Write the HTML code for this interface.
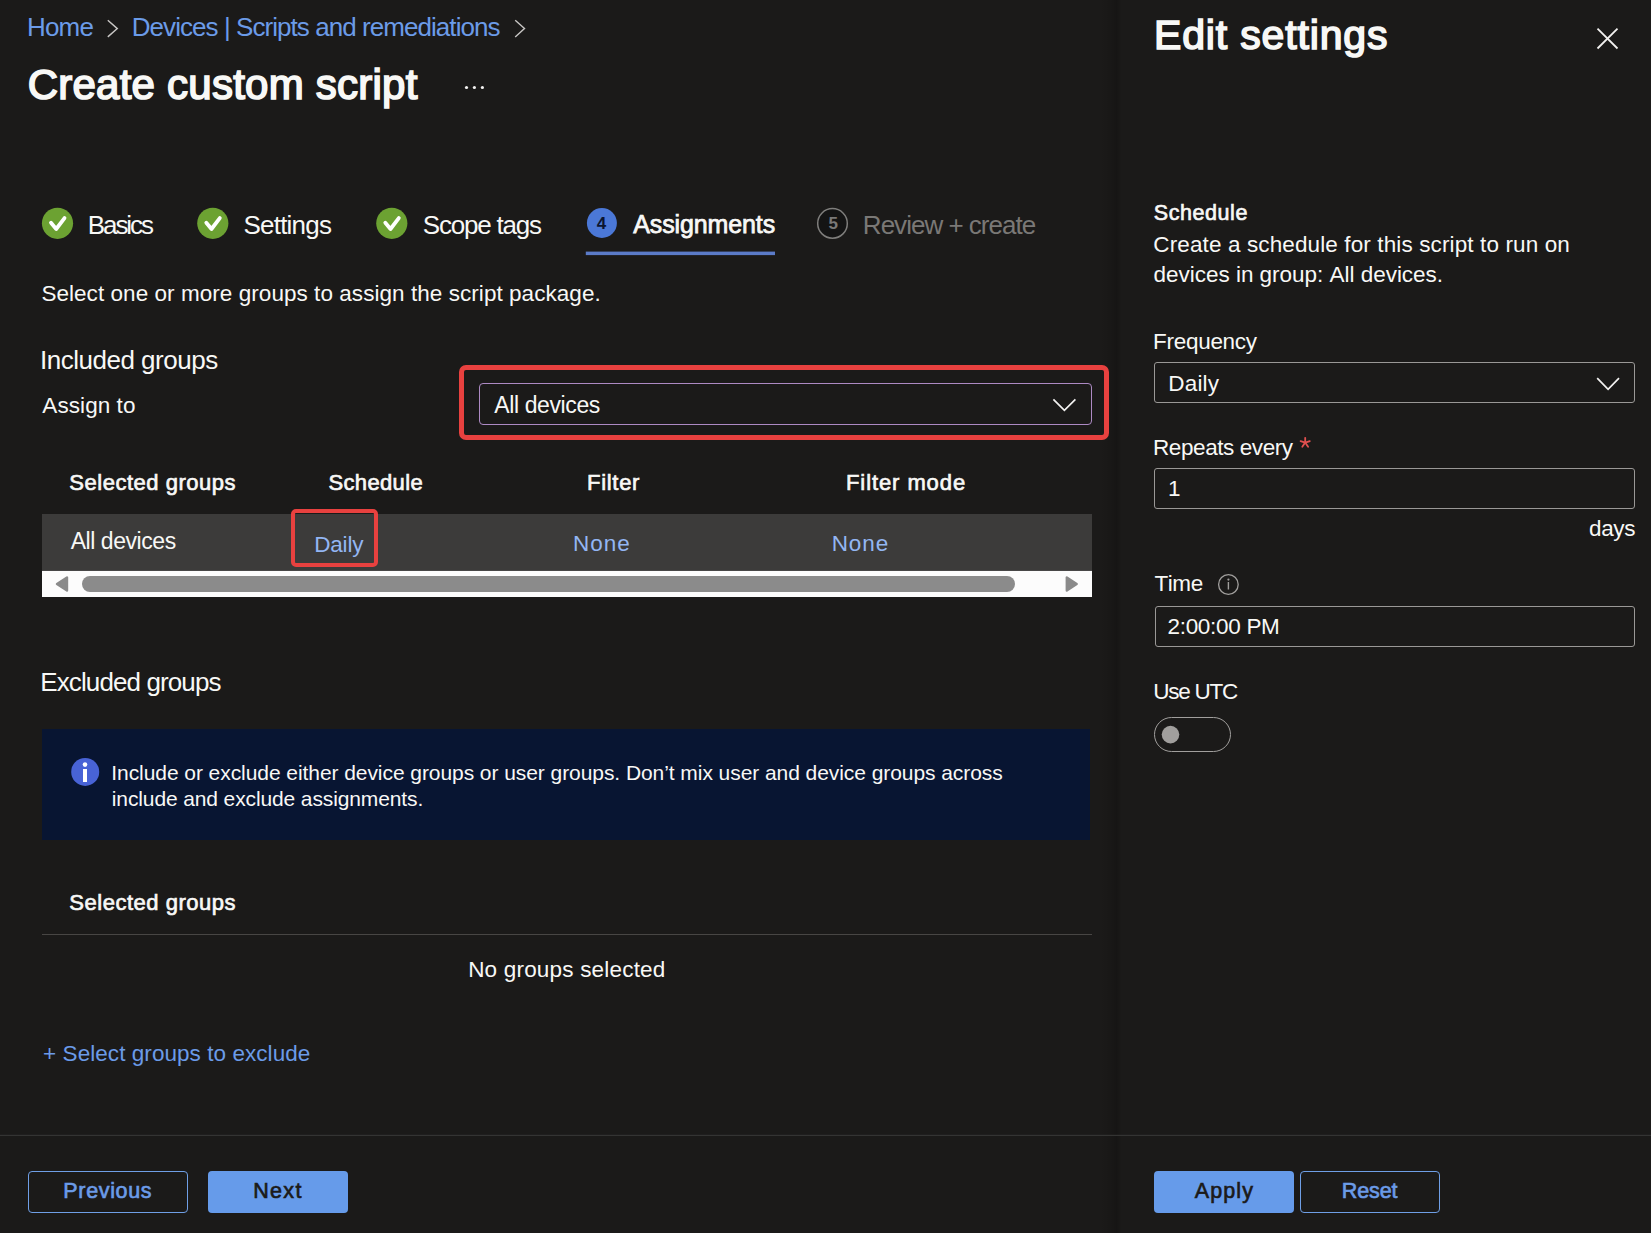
<!DOCTYPE html>
<html><head><meta charset="utf-8"><style>
html,body{margin:0;padding:0;background:#1b1a19;}
body{width:1651px;height:1233px;background:#1b1a19;position:relative;overflow:hidden;font-family:"Liberation Sans",sans-serif;}
.t{position:absolute;white-space:nowrap;font-kerning:none;}
.a{position:absolute;box-sizing:border-box;}
</style></head><body>
<!-- panel shadow -->
<div class="a" style="left:1100px;top:0;width:22px;height:1233px;background:linear-gradient(to right,rgba(0,0,0,0) 0%,rgba(0,0,0,0.10) 55%,rgba(0,0,0,0.18) 75%,rgba(0,0,0,0) 100%);"></div>

<!-- red box big -->
<div class="a" style="left:459px;top:365px;width:650px;height:75px;border:5px solid #e8413f;border-radius:7px;"></div>
<!-- purple dropdown -->
<div class="a" style="left:479px;top:383px;width:613.1px;height:42.2px;border:1px solid #ad8ac4;border-radius:4px;"></div>
<!-- row -->
<div class="a" style="left:41.6px;top:513.6px;width:1050.4px;height:56.4px;background:#3c3b3a;"></div>
<!-- red box daily -->
<div class="a" style="left:291px;top:509px;width:87px;height:58px;border:4px solid #e8413f;border-radius:5px;"></div>
<!-- info box -->
<div class="a" style="left:42.4px;top:728.5px;width:1047.8px;height:111px;background:#081532;"></div>
<!-- line under selected groups -->
<div class="a" style="left:42.4px;top:933.6px;width:1049.2px;height:1.2px;background:#484644;"></div>
<!-- previous / next -->
<div class="a" style="left:28.1px;top:1171.3px;width:159.7px;height:41.3px;border:1.5px solid #6f9fe6;border-radius:4px;"></div>
<div class="a" style="left:208px;top:1171px;width:139.8px;height:42px;background:#669bea;border-radius:4px;"></div>
<!-- right panel inputs -->
<div class="a" style="left:1154px;top:362.4px;width:480.6px;height:41px;border:1.4px solid #9a9896;border-radius:3px;"></div>
<div class="a" style="left:1154px;top:468.3px;width:480.6px;height:41.2px;border:1.4px solid #9a9896;border-radius:3px;"></div>
<div class="a" style="left:1154.5px;top:605.5px;width:480.1px;height:41.4px;border:1.4px solid #9a9896;border-radius:3px;"></div>
<div class="a" style="left:1154.1px;top:717px;width:76.7px;height:35px;border:1.5px solid #a19f9d;border-radius:18px;"></div>
<div class="a" style="left:1154.1px;top:1170.9px;width:139.9px;height:42.1px;background:#669bea;border-radius:4px;"></div>
<div class="a" style="left:1300.2px;top:1170.9px;width:139.6px;height:42.1px;border:1.5px solid #6f9fe6;border-radius:4px;"></div>
<svg class="a" style="left:0;top:0" width="1651" height="1233" viewBox="0 0 1651 1233">
  <!-- breadcrumb chevrons -->
  <polyline points="107.8,20.3 117.3,28.6 107.8,36.9" fill="none" stroke="#c8c6c4" stroke-width="1.4"/>
  <polyline points="515.2,20.3 524.5,28.6 515.2,36.9" fill="none" stroke="#c8c6c4" stroke-width="1.4"/>
  <!-- title dots -->
  <circle cx="466.5" cy="87.5" r="1.6" fill="#f3f2f1"/>
  <circle cx="474.4" cy="87.5" r="1.6" fill="#f3f2f1"/>
  <circle cx="482.4" cy="87.5" r="1.6" fill="#f3f2f1"/>
  <!-- green check circles -->
  <g>
  <circle cx="57.5" cy="223.3" r="15.6" fill="#6ca232"/>
  <polyline points="51.0,222.8 56.2,229.0 64.5,218.1" fill="none" stroke="#ffffff" stroke-width="3.8" stroke-linecap="round" stroke-linejoin="round"/>
  </g>
  <g transform="translate(155.3,0)">
  <circle cx="57.5" cy="223.3" r="15.6" fill="#6ca232"/>
  <polyline points="51.0,222.8 56.2,229.0 64.5,218.1" fill="none" stroke="#ffffff" stroke-width="3.8" stroke-linecap="round" stroke-linejoin="round"/>
  </g>
  <g transform="translate(334.3,0)">
  <circle cx="57.5" cy="223.3" r="15.6" fill="#6ca232"/>
  <polyline points="51.0,222.8 56.2,229.0 64.5,218.1" fill="none" stroke="#ffffff" stroke-width="3.8" stroke-linecap="round" stroke-linejoin="round"/>
  </g>
      <!-- step 4 -->
  <circle cx="601.9" cy="223" r="15" fill="#4b78d7"/>
  <!-- step 5 -->
  <circle cx="832.5" cy="223.4" r="14.8" fill="#141414" stroke="#7f7e7c" stroke-width="1.5"/>
  <!-- underline -->
  <rect x="585.8" y="251.6" width="189.2" height="3.5" fill="#5b7bc8"/>
  <!-- dropdown chevron (assign) -->
  <polyline points="1053.4,399.3 1064.4,410.4 1075.4,399.3" fill="none" stroke="#f3f2f1" stroke-width="1.7"/>
  <!-- scrollbar -->
  <rect x="42" y="570.8" width="1050" height="26.2" fill="#fcfcfc"/>
  <polygon points="57,584 67,577.5 67,590.5" fill="#8a8a8a" stroke="#8a8a8a" stroke-width="2.4" stroke-linejoin="round"/>
  <rect x="82" y="576" width="933" height="16" rx="8" fill="#8b8b8b"/>
  <polygon points="1076.7,584 1066.8,577.5 1066.8,590.5" fill="#8a8a8a" stroke="#8a8a8a" stroke-width="2.4" stroke-linejoin="round"/>
  <!-- info icon -->
  <circle cx="85.2" cy="771.9" r="14" fill="#4863d6"/>
  <circle cx="85" cy="764.6" r="2.3" fill="#ffffff"/>
  <rect x="83" y="769" width="4" height="13" fill="#ffffff"/>
  <!-- close X -->
  <line x1="1597.5" y1="28.6" x2="1617.5" y2="48.5" stroke="#f3f2f1" stroke-width="1.8"/>
  <line x1="1617.5" y1="28.6" x2="1597.5" y2="48.5" stroke="#f3f2f1" stroke-width="1.8"/>
  <!-- frequency chevron -->
  <polyline points="1597.2,378.2 1608.1,389.3 1619,378.2" fill="none" stroke="#f3f2f1" stroke-width="1.7"/>
  <!-- asterisk -->
  <g stroke="#e0504f" stroke-width="1.8" stroke-linecap="round">
    <line x1="1305.2" y1="437.8" x2="1305.2" y2="442.6"/>
    <line x1="1305.2" y1="442.6" x2="1309.8" y2="441.1"/>
    <line x1="1305.2" y1="442.6" x2="1300.6" y2="441.1"/>
    <line x1="1305.2" y1="442.6" x2="1308.1" y2="446.8"/>
    <line x1="1305.2" y1="442.6" x2="1302.3" y2="446.8"/>
  </g>
  <!-- time info icon -->
  <circle cx="1228.4" cy="584.5" r="9.8" fill="none" stroke="#a19f9d" stroke-width="1.3"/>
  <circle cx="1228.4" cy="579.6" r="1.1" fill="#a19f9d"/>
  <rect x="1227.7" y="582" width="1.4" height="7.5" fill="#a19f9d"/>
  <!-- toggle knob -->
  <circle cx="1170.5" cy="734.6" r="8.8" fill="#a19f9d"/>
  <!-- bottom divider -->
  <rect x="0" y="1134.8" width="1651" height="1.2" fill="#343433"/>
</svg>
<div class="t" style="left:26.97px;top:14.29px;font-size:26px;line-height:26px;font-weight:400;letter-spacing:-0.822px;color:#6b9be8;">Home</div>
<div class="t" style="left:131.77px;top:14.29px;font-size:26px;line-height:26px;font-weight:400;letter-spacing:-0.941px;color:#6b9be8;">Devices | Scripts and remediations</div>
<div class="t" style="left:27.71px;top:63.61px;font-size:42px;line-height:42px;font-weight:400;letter-spacing:0.239px;color:#f8f8f6;-webkit-text-stroke:1.68px #f8f8f6;">Create custom script</div>
<div class="t" style="left:87.87px;top:211.79px;font-size:26px;line-height:26px;font-weight:400;letter-spacing:-2.101px;color:#f8f8f6;">Basics</div>
<div class="t" style="left:243.52px;top:211.79px;font-size:26px;line-height:26px;font-weight:400;letter-spacing:-0.789px;color:#f8f8f6;">Settings</div>
<div class="t" style="left:422.82px;top:211.79px;font-size:26px;line-height:26px;font-weight:400;letter-spacing:-1.219px;color:#f8f8f6;">Scope tags</div>
<div class="t" style="left:633.33px;top:212.26px;font-size:25px;line-height:25px;font-weight:400;letter-spacing:-0.131px;color:#f8f8f6;-webkit-text-stroke:0.75px #f8f8f6;">Assignments</div>
<div class="t" style="left:862.87px;top:211.79px;font-size:26px;line-height:26px;font-weight:400;letter-spacing:-0.990px;color:#7a7876;">Review + create</div>
<div class="t" style="left:41.38px;top:283.15px;font-size:22.5px;line-height:22.5px;font-weight:400;letter-spacing:0.052px;color:#f8f8f6;">Select one or more groups to assign the script package.</div>
<div class="t" style="left:40.00px;top:346.99px;font-size:26px;line-height:26px;font-weight:400;letter-spacing:-0.492px;color:#f8f8f6;">Included groups</div>
<div class="t" style="left:42.36px;top:395.45px;font-size:22.5px;line-height:22.5px;font-weight:400;letter-spacing:0.067px;color:#f8f8f6;">Assign to</div>
<div class="t" style="left:494.36px;top:393.53px;font-size:23px;line-height:23px;font-weight:400;letter-spacing:-0.396px;color:#f8f8f6;">All devices</div>
<div class="t" style="left:69.33px;top:472.35px;font-size:22px;line-height:22px;font-weight:400;letter-spacing:0.510px;color:#f8f8f6;-webkit-text-stroke:0.66px #f8f8f6;">Selected groups</div>
<div class="t" style="left:328.53px;top:472.35px;font-size:22px;line-height:22px;font-weight:400;letter-spacing:0.340px;color:#f8f8f6;-webkit-text-stroke:0.66px #f8f8f6;">Schedule</div>
<div class="t" style="left:587.03px;top:472.35px;font-size:22px;line-height:22px;font-weight:400;letter-spacing:0.704px;color:#f8f8f6;-webkit-text-stroke:0.66px #f8f8f6;">Filter</div>
<div class="t" style="left:846.03px;top:472.35px;font-size:22px;line-height:22px;font-weight:400;letter-spacing:0.909px;color:#f8f8f6;-webkit-text-stroke:0.66px #f8f8f6;">Filter mode</div>
<div class="t" style="left:70.66px;top:530.03px;font-size:23px;line-height:23px;font-weight:400;letter-spacing:-0.446px;color:#f8f8f6;">All devices</div>
<div class="t" style="left:314.15px;top:533.75px;font-size:22.5px;line-height:22.5px;font-weight:400;letter-spacing:-0.155px;color:#93b6f3;">Daily</div>
<div class="t" style="left:572.95px;top:533.45px;font-size:22.5px;line-height:22.5px;font-weight:400;letter-spacing:0.985px;color:#93b6f3;">None</div>
<div class="t" style="left:831.65px;top:533.45px;font-size:22.5px;line-height:22.5px;font-weight:400;letter-spacing:0.985px;color:#93b6f3;">None</div>
<div class="t" style="left:40.27px;top:668.89px;font-size:26px;line-height:26px;font-weight:400;letter-spacing:-0.893px;color:#f8f8f6;">Excluded groups</div>
<div class="t" style="left:111.26px;top:761.52px;font-size:21px;line-height:21px;font-weight:400;letter-spacing:-0.065px;color:#f8f8f6;">Include or exclude either device groups or user groups. Don’t mix user and device groups across</div>
<div class="t" style="left:111.80px;top:787.62px;font-size:21px;line-height:21px;font-weight:400;letter-spacing:-0.122px;color:#f8f8f6;">include and exclude assignments.</div>
<div class="t" style="left:69.33px;top:891.95px;font-size:22px;line-height:22px;font-weight:400;letter-spacing:0.510px;color:#f8f8f6;-webkit-text-stroke:0.66px #f8f8f6;">Selected groups</div>
<div class="t" style="left:468.15px;top:958.65px;font-size:22.5px;line-height:22.5px;font-weight:400;letter-spacing:0.196px;color:#f8f8f6;">No groups selected</div>
<div class="t" style="left:43.10px;top:1042.65px;font-size:22.5px;line-height:22.5px;font-weight:400;letter-spacing:0.056px;color:#6b9be8;">+ Select groups to exclude</div>
<div class="t" style="left:63.36px;top:1180.98px;font-size:21.5px;line-height:21.5px;font-weight:400;letter-spacing:0.650px;color:#6b9be8;-webkit-text-stroke:0.65px #6b9be8;">Previous</div>
<div class="t" style="left:253.16px;top:1180.98px;font-size:21.5px;line-height:21.5px;font-weight:400;letter-spacing:1.356px;color:#1b1a19;-webkit-text-stroke:0.65px #1b1a19;">Next</div>
<div class="t" style="left:1154.06px;top:15.27px;font-size:41px;line-height:41px;font-weight:400;letter-spacing:0.839px;color:#f8f8f6;-webkit-text-stroke:1.64px #f8f8f6;">Edit settings</div>
<div class="t" style="left:1153.85px;top:202.68px;font-size:21.5px;line-height:21.5px;font-weight:400;letter-spacing:0.548px;color:#f8f8f6;-webkit-text-stroke:0.65px #f8f8f6;">Schedule</div>
<div class="t" style="left:1153.36px;top:233.75px;font-size:22.5px;line-height:22.5px;font-weight:400;letter-spacing:0.118px;color:#f8f8f6;">Create a schedule for this script to run on</div>
<div class="t" style="left:1153.56px;top:264.35px;font-size:22.5px;line-height:22.5px;font-weight:400;letter-spacing:-0.022px;color:#f8f8f6;">devices in group: All devices.</div>
<div class="t" style="left:1153.05px;top:330.75px;font-size:22.5px;line-height:22.5px;font-weight:400;letter-spacing:-0.289px;color:#f8f8f6;">Frequency</div>
<div class="t" style="left:1168.35px;top:372.75px;font-size:22.5px;line-height:22.5px;font-weight:400;letter-spacing:0.170px;color:#f8f8f6;">Daily</div>
<div class="t" style="left:1153.05px;top:436.55px;font-size:22.5px;line-height:22.5px;font-weight:400;letter-spacing:-0.424px;color:#f8f8f6;">Repeats every</div>
<div class="t" style="left:1168.09px;top:478.15px;font-size:22.5px;line-height:22.5px;font-weight:400;letter-spacing:0.000px;color:#f8f8f6;">1</div>
<div class="t" style="left:1589.06px;top:518.05px;font-size:22.5px;line-height:22.5px;font-weight:400;letter-spacing:-0.390px;color:#f8f8f6;">days</div>
<div class="t" style="left:1154.49px;top:573.35px;font-size:22.5px;line-height:22.5px;font-weight:400;letter-spacing:-0.431px;color:#f8f8f6;">Time</div>
<div class="t" style="left:1167.47px;top:615.65px;font-size:22.5px;line-height:22.5px;font-weight:400;letter-spacing:-0.299px;color:#f8f8f6;">2:00:00 PM</div>
<div class="t" style="left:1153.26px;top:680.65px;font-size:22.5px;line-height:22.5px;font-weight:400;letter-spacing:-1.252px;color:#f8f8f6;">Use UTC</div>
<div class="t" style="left:596.64px;top:215.21px;font-size:17px;line-height:17px;font-weight:700;letter-spacing:0.000px;color:#0b1530;">4</div>
<div class="t" style="left:828.38px;top:214.61px;font-size:17px;line-height:17px;font-weight:700;letter-spacing:0.000px;color:#7a7978;">5</div>
<div class="t" style="left:1194.78px;top:1180.58px;font-size:21.5px;line-height:21.5px;font-weight:400;letter-spacing:1.089px;color:#1b1a19;-webkit-text-stroke:0.65px #1b1a19;">Apply</div>
<div class="t" style="left:1341.86px;top:1180.58px;font-size:21.5px;line-height:21.5px;font-weight:400;letter-spacing:-0.147px;color:#6b9be8;-webkit-text-stroke:0.65px #6b9be8;">Reset</div>
</body></html>
